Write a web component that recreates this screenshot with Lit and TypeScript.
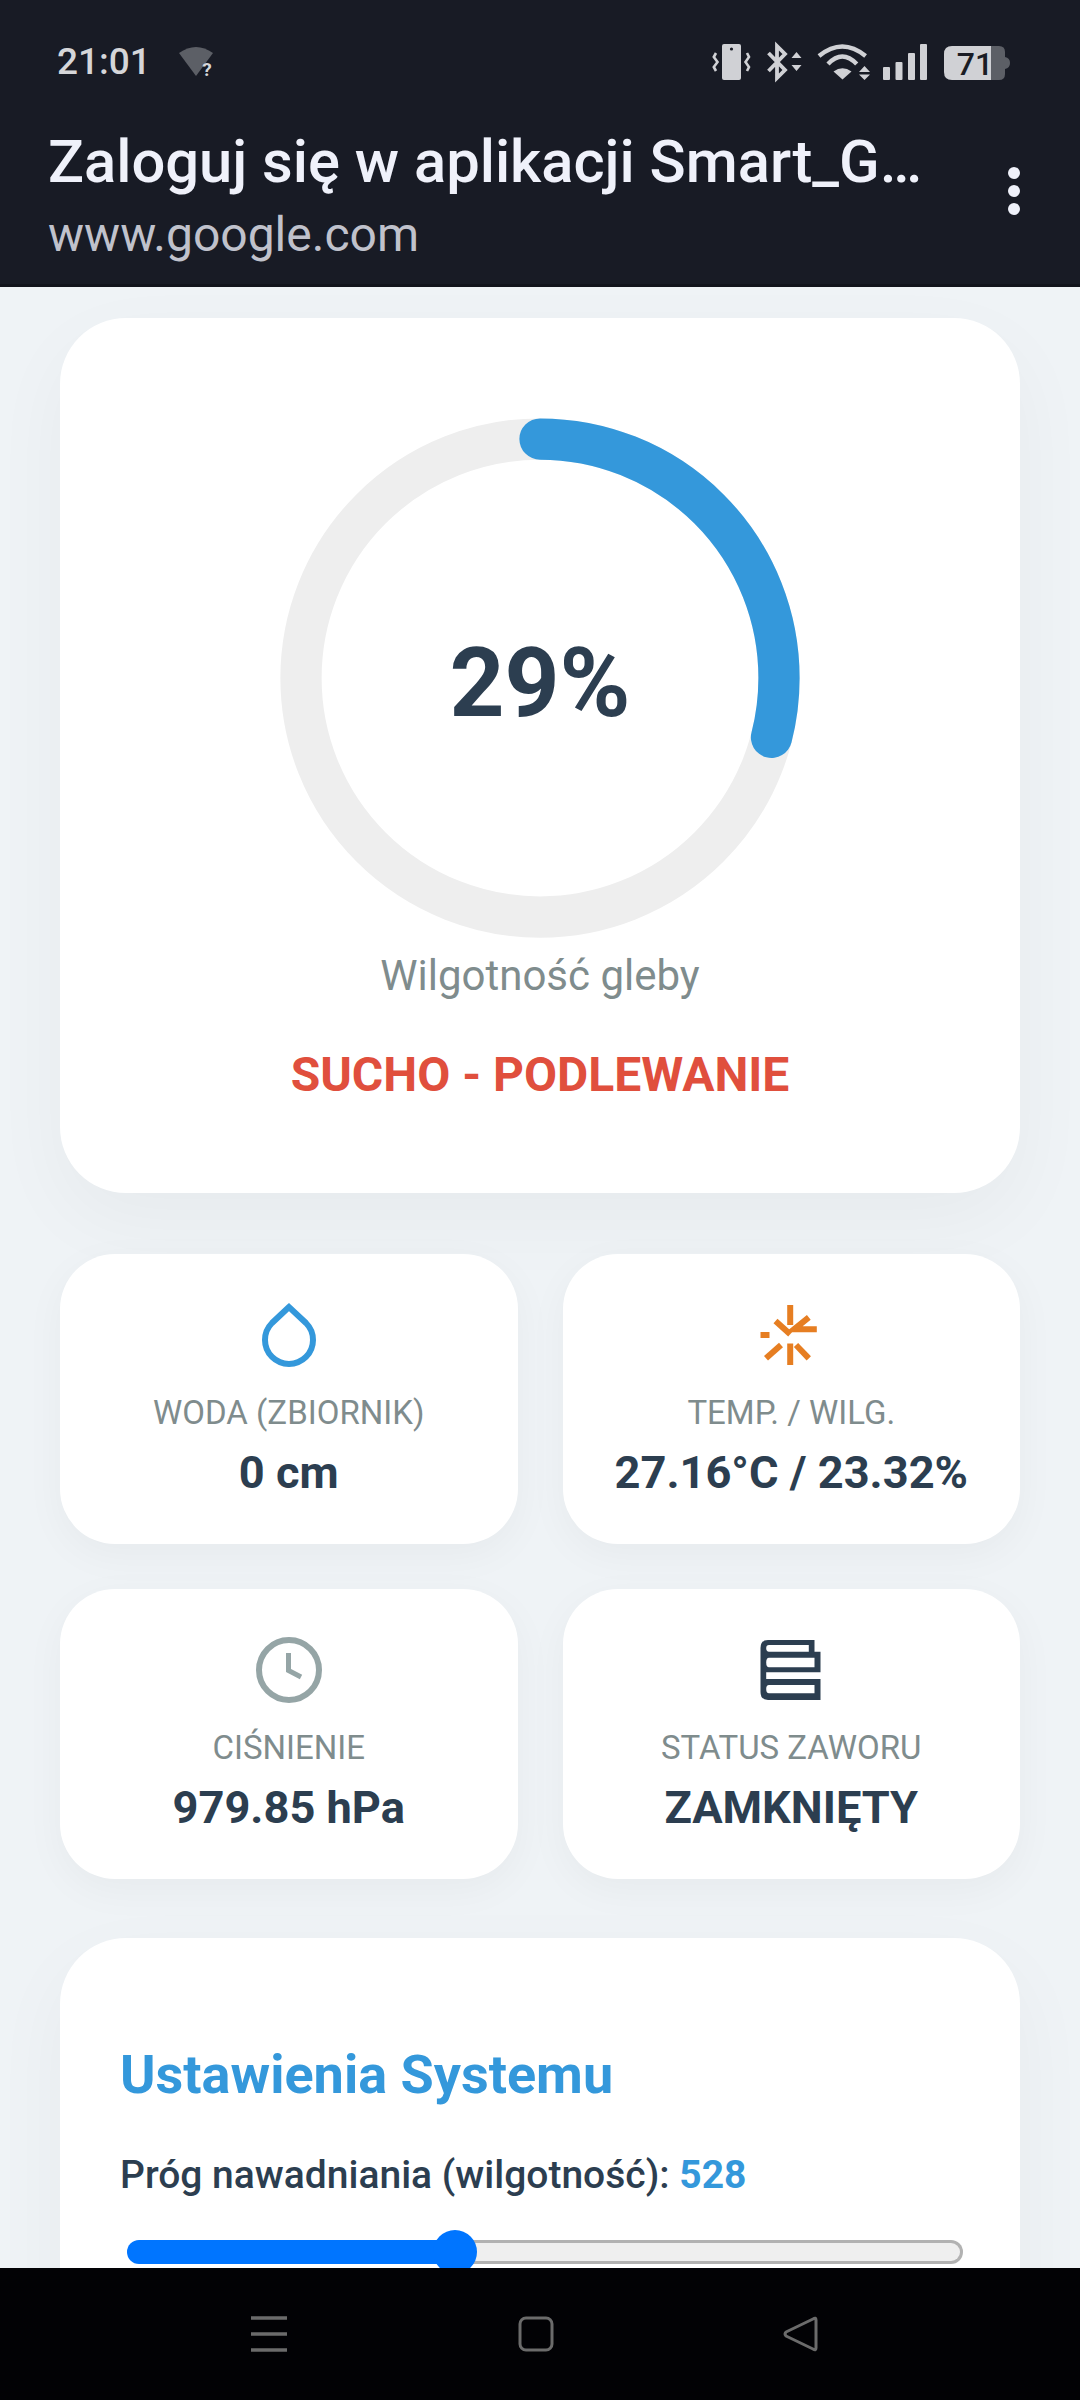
import { LitElement, html, css, svg } from "lit";
import { customElement, state } from "lit/decorators.js";

const ICONS = {
  drop: svg`<path d="M33 5 L16 21 A24 24 0 1 0 50 21 Z" fill="none" stroke="#3498db" stroke-width="6" stroke-linejoin="miter"/>`,
  sun: svg`<g fill="none" stroke="#e67e22" stroke-width="6">
    <path d="M32.2 3V23"/><path d="M58.8 27.3H36L50.8 15.3"/><path d="M17.5 19L32.2 32.3"/>
    <path d="M2.5 33H11.5"/><path d="M8 56.3L23 43"/><path d="M32.2 41.5V63"/><path d="M38 43L50.8 56.3"/>
  </g>`,
  clock: svg`<g fill="none" stroke="#95a5a6"><circle cx="33" cy="33" r="30" stroke-width="6"/>
    <path d="M32.5 16V33.5L45 40" stroke-width="5"/></g>`,
  valve: svg`<path fill="#2c3e50" fill-rule="evenodd" d="M10 3H56.5V14.7H62.5V35.3H8.2V42H62.5V63H10Q2.5 63 2.5 55V11Q2.5 3 10 3Z
    M11 8H50.8V14.7H11Q8.2 14.7 8.2 11.3Q8.2 8 11 8Z
    M11 20.7H56.5V30.3H11Q8.2 30.3 8.2 25.5Q8.2 20.7 11 20.7Z
    M11 48H56.5V56.3H11Q8.2 56.3 8.2 52Q8.2 48 11 48Z"/>`,
};

const TILES = [
  { icon: ICONS.drop, label: "WODA (ZBIORNIK)", value: "0 cm" },
  { icon: ICONS.sun, label: "TEMP. / WILG.", value: "27.16°C / 23.32%" },
  { icon: ICONS.clock, label: "CIŚNIENIE", value: "979.85 hPa" },
  { icon: ICONS.valve, label: "STATUS ZAWORU", value: "ZAMKNIĘTY" },
];

const THRESHOLD_MIN = 200;
const THRESHOLD_MAX = 1050;
const THUMB = 44;

@customElement("app-root")
export class AppRoot extends LitElement {
  static styles = css`
    :host {
      display: flex;
      flex-direction: column;
      width: 1080px;
      height: 2400px;
      overflow: hidden;
      background: #eff3f6;
      font-family: Roboto, "Noto Sans", sans-serif;
      color: #2c3e50;
    }
    .top {
      flex: none;
      height: 287px;
      box-sizing: border-box;
      background: #181b25;
      border-bottom: 3px solid #12141c;
    }
    .status {
      display: flex;
      align-items: center;
      height: 44px;
      padding: 40px 0 0 57px;
      color: #d5d6d9;
    }
    .time {
      font-size: 37px;
      font-weight: 500;
      line-height: 44px;
    }
    .nosignal {
      margin-left: 28px;
      overflow: visible;
    }
    .status-right {
      display: flex;
      align-items: center;
      margin-left: auto;
      margin-right: 70px;
    }
    .status-right svg {
      display: block;
      overflow: visible;
    }
    .titlebar {
      display: flex;
      align-items: flex-start;
      padding: 45px 0 0 48px;
    }
    .titles {
      width: 880px;
    }
    .title {
      font-size: 59.7px;
      line-height: 66px;
      font-weight: 500;
      color: #eff1fa;
      white-space: nowrap;
    }
    .url {
      margin-top: 14px;
      font-size: 48px;
      line-height: 52px;
      color: #c0c2cc;
    }
    .kebab {
      display: flex;
      flex-direction: column;
      gap: 6px;
      margin: 38px 0 0 80px;
    }
    .kebab i {
      width: 12px;
      height: 12px;
      border-radius: 50%;
      background: #eff1fa;
    }
    main {
      flex: 1;
      min-height: 0;
      overflow: hidden;
      padding: 31px 60px 0;
    }
    .card {
      background: #fff;
      border-radius: 66px;
      box-shadow: 0 27px 80px rgba(0, 0, 0, 0.04);
    }
    .gauge {
      display: flex;
      flex-direction: column;
      align-items: center;
      height: 875px;
      box-sizing: border-box;
      padding-top: 100px;
    }
    .ring {
      position: relative;
      width: 520px;
      height: 520px;
    }
    .ring svg {
      display: block;
    }
    .pct {
      position: absolute;
      inset: 10px 0 0;
      display: flex;
      align-items: center;
      justify-content: center;
      font-size: 96px;
      font-weight: 700;
    }
    .gauge-label {
      margin-top: 14px;
      font-size: 42px;
      line-height: 48px;
      color: #7f8c8d;
    }
    .gauge-state {
      margin-top: 49px;
      font-size: 48px;
      line-height: 52px;
      font-weight: 700;
      color: #e04f3d;
    }
    .tiles {
      display: grid;
      grid-template-columns: 1fr 1fr;
      gap: 45px;
      margin-top: 61px;
    }
    .tile {
      display: flex;
      flex-direction: column;
      align-items: center;
      height: 290px;
      box-sizing: border-box;
      padding-top: 48px;
      background: #fff;
      border-radius: 55px;
      box-shadow: 0 11px 41px rgba(0, 0, 0, 0.04);
    }
    .tile svg {
      display: block;
    }
    .tile-label {
      margin-top: 24px;
      font-size: 33px;
      line-height: 42px;
      color: #7f8c8d;
    }
    .tile-value {
      margin-top: 13px;
      font-size: 45.2px;
      line-height: 52px;
      font-weight: 700;
    }
    .settings {
      margin-top: 59px;
      padding: 106px 60px 60px;
      height: 600px;
      box-sizing: border-box;
    }
    h2 {
      margin: 0;
      font-size: 54px;
      line-height: 62px;
      font-weight: 700;
      color: #3498db;
    }
    .threshold {
      margin-top: 46px;
      font-size: 39px;
      line-height: 46px;
      font-weight: 500;
    }
    .threshold b {
      color: #3498db;
    }
    input[type="range"] {
      display: block;
      -webkit-appearance: none;
      appearance: none;
      width: 836px;
      height: 44px;
      margin: 32px 0 0 7px;
      padding: 0;
      background: transparent;
    }
    input[type="range"]::-webkit-slider-runnable-track {
      height: 24px;
      box-sizing: border-box;
      border: 3px solid transparent;
      border-radius: 12px;
      background:
        linear-gradient(#0075ff, #0075ff) left / var(--fill) 100% no-repeat border-box,
        linear-gradient(#efefef, #efefef) padding-box,
        #b2b2b2 border-box;
    }
    input[type="range"]::-webkit-slider-thumb {
      -webkit-appearance: none;
      width: 44px;
      height: 44px;
      margin-top: -13px;
      border-radius: 50%;
      background: #0075ff;
    }
    nav {
      flex: none;
      height: 132px;
      display: flex;
      align-items: center;
      background: #020205;
    }
    nav svg {
      display: block;
      fill: none;
      stroke: #6b6b6b;
      stroke-width: 3;
    }
    .nav-menu {
      margin-left: 251px;
    }
    .nav-home {
      margin-left: 231px;
    }
    .nav-back {
      margin-left: 229px;
    }
  `;

  @state() moisture = 29;
  @state() threshold = 528;

  private onThreshold(e: Event) {
    this.threshold = Number((e.target as HTMLInputElement).value);
  }

  private statusIcons() {
    const c = "#d0d1d5";
    return html`
      <svg width="37" height="36" viewBox="0 0 37 36" fill="none" stroke=${c} stroke-width="2.6">
        <rect x="9" y="0" width="19" height="36" rx="2" fill=${c} stroke="none"/>
        <circle cx="18.5" cy="5" r="1.6" fill="#181b25" stroke="none"/>
        <path d="M3 9L0.8 13L4.5 18L0.8 23L3 27"/>
        <path d="M34 9L36 13L32.5 18L36 23L34 27"/>
      </svg>
      <svg style="margin-left:17px" width="35" height="36" viewBox="0 0 35 36" fill="none" stroke=${c} stroke-width="3.8">
        <path d="M1.5 9L18 26L10 34V2L18 10L1.5 27"/>
        <path d="M24.5 14L29.5 8L34.5 14ZM24.5 21L29.5 27L34.5 21Z" fill=${c} stroke="none"/>
      </svg>
      <svg style="margin-left:16px" width="52" height="36" viewBox="0 0 52 36" fill="none" stroke=${c} stroke-width="4.4">
        <path d="M1 12Q24.3 -7 47.6 12"/>
        <path d="M10 20Q24.3 5 38.7 20"/>
        <path d="M24.5 35.5L15.5 27.5Q24.5 21 33.5 27.5Z" fill=${c} stroke="none"/>
        <path d="M41 28L46.5 22L52 28ZM41 30.5L46.5 36L52 30.5Z" fill=${c} stroke="none"/>
      </svg>
      <svg style="margin-left:13px" width="44" height="36" viewBox="0 0 44 36" fill=${c}>
        <rect x="0" y="23" width="7" height="13" rx="1"/>
        <rect x="12.5" y="18" width="7" height="18" rx="1"/>
        <rect x="25" y="9" width="7" height="27" rx="1"/>
        <rect x="37" y="0" width="7" height="36" rx="1"/>
      </svg>
      <svg style="margin-left:17px" width="66" height="36" viewBox="0 0 66 36">
        <path d="M47 2H55Q61 2 61 8V30Q61 36 55 36H47Z" fill="#5c5f66"/>
        <path d="M61 13Q66 14 66 19Q66 24 61 25Z" fill="#5c5f66"/>
        <path d="M8 2H47V36H8Q0 36 0 28V10Q0 2 8 2Z" fill=${c}/>
        <text x="31" y="31" text-anchor="middle" font-size="32" font-weight="500" fill="#1a1c24">71</text>
      </svg>
    `;
  }

  render() {
    const frac = (this.threshold - THRESHOLD_MIN) / (THRESHOLD_MAX - THRESHOLD_MIN);
    const fill = THUMB / 2 + frac * (836 - THUMB);
    return html`
      <header class="top">
        <div class="status">
          <span class="time">21:01</span>
          <svg class="nosignal" width="36" height="32" viewBox="0 0 36 32">
            <path d="M0 7Q17 -5 34 7L17 30Z" fill="#5c5f66"/>
            <text x="28" y="30" text-anchor="middle" font-size="19" font-weight="700" fill="#d5d6d9">?</text>
          </svg>
          <div class="status-right">${this.statusIcons()}</div>
        </div>
        <div class="titlebar">
          <div class="titles">
            <div class="title">Zaloguj się w aplikacji Smart_G…</div>
            <div class="url">www.google.com</div>
          </div>
          <div class="kebab"><i></i><i></i><i></i></div>
        </div>
      </header>
      <main>
        <section class="card gauge">
          <div class="ring">
            <svg width="520" height="520" viewBox="0 0 520 520" fill="none" stroke-width="41.25">
              <circle cx="260" cy="260" r="239" stroke="#eee"/>
              <circle
                cx="260"
                cy="260"
                r="239"
                stroke="#3498db"
                stroke-linecap="round"
                pathLength="100"
                stroke-dasharray="${this.moisture} 100"
                transform="rotate(-90 260 260)"
              />
            </svg>
            <div class="pct">${this.moisture}%</div>
          </div>
          <div class="gauge-label">Wilgotność gleby</div>
          <div class="gauge-state">SUCHO - PODLEWANIE</div>
        </section>
        <section class="tiles">
          ${TILES.map(
            (t) => html`
              <div class="tile">
                <svg width="66" height="66" viewBox="0 0 66 66">${t.icon}</svg>
                <div class="tile-label">${t.label}</div>
                <div class="tile-value">${t.value}</div>
              </div>
            `
          )}
        </section>
        <section class="card settings">
          <h2>Ustawienia Systemu</h2>
          <div class="threshold">Próg nawadniania (wilgotność): <b>${this.threshold}</b></div>
          <input
            type="range"
            min=${THRESHOLD_MIN}
            max=${THRESHOLD_MAX}
            style="--fill:${fill}px"
            .value=${String(this.threshold)}
            @input=${this.onThreshold}
          />
        </section>
      </main>
      <nav>
        <svg class="nav-menu" width="36" height="36" viewBox="0 0 36 36" style="stroke-width:3.5">
          <path d="M0 2H36M0 18H36M0 34H36"/>
        </svg>
        <svg class="nav-home" width="36" height="36" viewBox="0 0 36 36">
          <rect x="2" y="2" width="32" height="32" rx="6"/>
        </svg>
        <svg class="nav-back" width="36" height="36" viewBox="0 0 36 36">
          <path d="M33 4Q33 1 30 3L3 16Q1 18 3 20L30 33Q33 35 33 32Z" stroke-linejoin="round"/>
        </svg>
      </nav>
    `;
  }
}
